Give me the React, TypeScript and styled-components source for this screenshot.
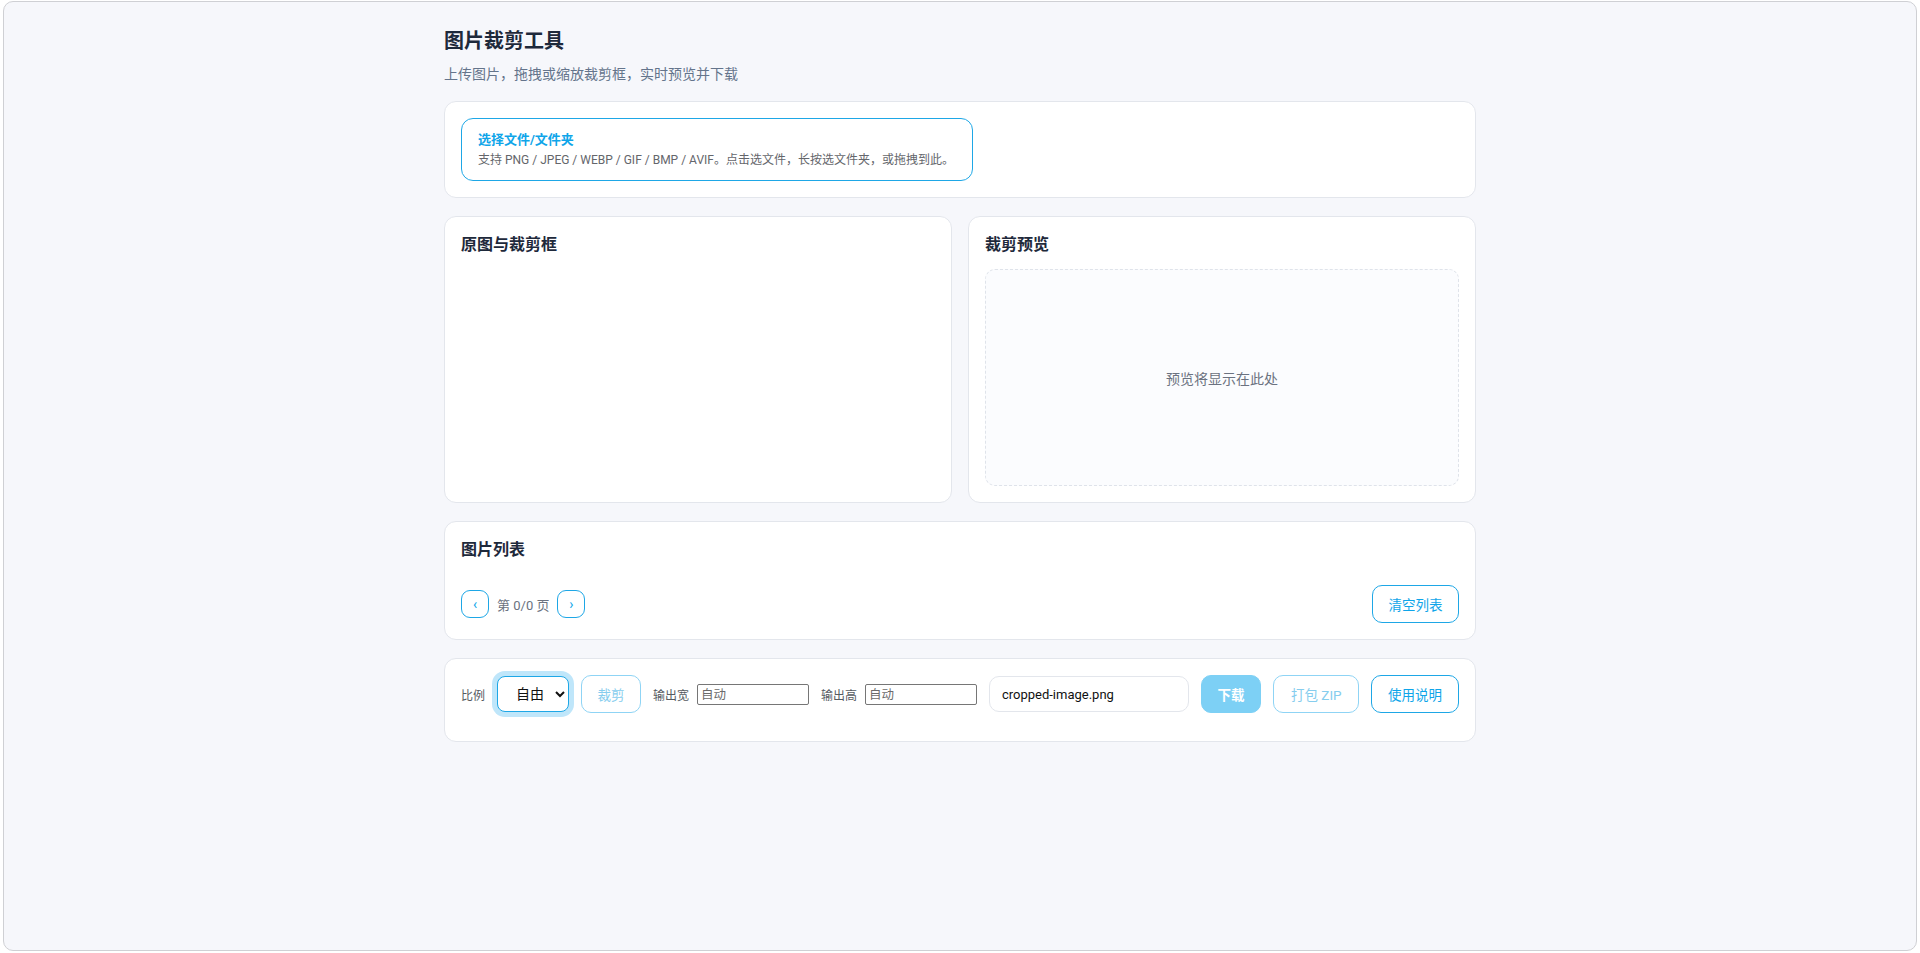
import styled, { createGlobalStyle } from 'styled-components';

const GlobalStyle = createGlobalStyle`
  html, body {
    margin: 0;
    padding: 0;
    background: #ffffff;
  }
  body {
    font-family: Roboto, "Noto Sans CJK SC", "Noto Sans", sans-serif;
    color: #1f2937;
  }
  * {
    box-sizing: border-box;
  }
`;

const Frame = styled.div`
  margin: 1px 3px 0;
  height: 950px;
  border: 1px solid #cfd0d4;
  border-radius: 10px;
  background: #f6f7fb;
  overflow: hidden;
`;

const Container = styled.div`
  width: 1032px;
  margin: 0 auto;
  padding-top: 25px;
  display: flex;
  flex-direction: column;
`;

const Title = styled.h1`
  margin: 0;
  font-size: 20px;
  line-height: 28px;
  font-weight: 700;
  color: #1e293b;
`;

const Subtitle = styled.p`
  margin: 9px 0 0;
  font-size: 14px;
  line-height: 20px;
  color: #64748b;
`;

const Stack = styled.div`
  margin-top: 17px;
  display: flex;
  flex-direction: column;
  gap: 18px;
`;

const Card = styled.section<{ bottom?: number }>`
  background: #ffffff;
  border: 1px solid #e3e6ec;
  border-radius: 12px;
  padding: 16px 16px ${(p) => p.bottom ?? 16}px;
  display: flex;
  flex-direction: column;
`;

const Grid = styled.div`
  display: grid;
  grid-template-columns: 1fr 1fr;
  gap: 16px;
`;

const CardTitle = styled.h2<{ gap?: number }>`
  margin: 0 0 ${(p) => p.gap ?? 12}px;
  font-size: 16px;
  line-height: 24px;
  font-weight: 700;
  color: #1e293b;
`;

const UploadBox = styled.div`
  width: 512px;
  height: 63px;
  border: 1px solid #1ea7e6;
  border-radius: 12px;
  padding: 0 12px 0 16px;
  display: flex;
  flex-direction: column;
  justify-content: center;
  gap: 2px;
`;

const UploadTitle = styled.div`
  font-size: 13px;
  line-height: 18px;
  font-weight: 700;
  color: #0ea5e9;
`;

const UploadDesc = styled.div`
  font-size: 12px;
  line-height: 18px;
  color: #64666b;
  white-space: nowrap;
`;

const Preview = styled.div`
  height: 217px;
  border: 1px dashed #dfe3ea;
  border-radius: 10px;
  background: #fbfcfe;
  display: flex;
  align-items: center;
  justify-content: center;
  font-size: 14px;
  color: #6b7280;
`;

const Row = styled.div<{ spread?: boolean }>`
  display: flex;
  align-items: center;
  gap: 12px;
  justify-content: ${(p) => (p.spread ? 'space-between' : 'flex-start')};
`;

const Pager = styled.div`
  display: flex;
  align-items: center;
  gap: 8px;
  font-size: 13px;
  color: #6b7280;
`;

const PageBtn = styled.button`
  width: 28px;
  height: 28px;
  padding: 0;
  border: 1px solid #1ea7e6;
  border-radius: 9px;
  background: #fff;
  color: #0ea5e9;
  font-size: 14px;
  line-height: 24px;
  font-family: inherit;
`;

const Button = styled.button<{ tone?: 'outline' | 'muted' | 'solid'; w: number }>`
  width: ${(p) => p.w}px;
  height: 38px;
  padding: 0;
  border-radius: 10px;
  font-family: inherit;
  font-size: 13.5px;
  border: 1px solid
    ${(p) => (p.tone === 'outline' ? '#1ea7e6' : p.tone === 'solid' ? '#7dd0f5' : '#8fd4f5')};
  background: ${(p) => (p.tone === 'solid' ? '#7dd0f5' : '#ffffff')};
  color: ${(p) => (p.tone === 'outline' ? '#0ea5e9' : p.tone === 'solid' ? '#ffffff' : '#86cdee')};
  font-weight: ${(p) => (p.tone === 'solid' ? 700 : 400)};
`;

const Label = styled.label`
  display: flex;
  align-items: center;
  gap: 8px;
  font-size: 12px;
  color: #555a61;
  white-space: nowrap;
`;

const Select = styled.select`
  width: 72px;
  height: 36px;
  margin-left: 4px;
  padding: 0 8px 0 14px;
  border: 1px solid #1ea7e6;
  border-radius: 8px;
  background: #fff;
  font-family: inherit;
  font-size: 14px;
  color: #111;
  box-shadow: 0 0 0 5px #bfe6fa;
  outline: none;
`;

const SizeInput = styled.input`
  width: 112px;
  height: 21px;
  padding: 1px 3px;
  border: 1px solid #767676;
  border-radius: 2px;
  font-family: inherit;
  font-size: 12.5px;
  &::placeholder {
    color: #6b6b6b;
  }
`;

const NameInput = styled.input`
  width: 200px;
  height: 36px;
  padding: 0 12px;
  border: 1px solid #e3e6ec;
  border-radius: 10px;
  font-family: inherit;
  font-size: 13px;
  color: #111;
`;

export default function App() {
  return (
    <>
      <GlobalStyle />
      <Frame>
        <Container>
          <Title>图片裁剪工具</Title>
          <Subtitle>上传图片，拖拽或缩放裁剪框，实时预览并下载</Subtitle>
          <Stack>
            <Card>
              <UploadBox>
                <UploadTitle>选择文件/文件夹</UploadTitle>
                <UploadDesc>支持 PNG / JPEG / WEBP / GIF / BMP / AVIF。点击选文件，长按选文件夹，或拖拽到此。</UploadDesc>
              </UploadBox>
            </Card>

            <Grid>
              <Card>
                <CardTitle>原图与裁剪框</CardTitle>
              </Card>
              <Card>
                <CardTitle>裁剪预览</CardTitle>
                <Preview>预览将显示在此处</Preview>
              </Card>
            </Grid>

            <Card>
              <CardTitle gap={23}>图片列表</CardTitle>
              <Row spread>
                <Pager>
                  <PageBtn>‹</PageBtn>
                  <span>第 0/0 页</span>
                  <PageBtn>›</PageBtn>
                </Pager>
                <Button tone="outline" w={87}>清空列表</Button>
              </Row>
            </Card>

            <Card bottom={28}>
              <Row>
                <Label>
                  比例
                  <Select defaultValue="free">
                    <option value="free">自由</option>
                    <option value="1:1">1:1</option>
                    <option value="4:3">4:3</option>
                    <option value="16:9">16:9</option>
                  </Select>
                </Label>
                <Button tone="muted" w={60} disabled>裁剪</Button>
                <Label>
                  输出宽
                  <SizeInput placeholder="自动" />
                </Label>
                <Label>
                  输出高
                  <SizeInput placeholder="自动" />
                </Label>
                <NameInput defaultValue="cropped-image.png" />
                <Button tone="solid" w={61} disabled>下载</Button>
                <Button tone="muted" w={86} disabled>打包 ZIP</Button>
                <Button tone="outline" w={88}>使用说明</Button>
              </Row>
            </Card>
          </Stack>
        </Container>
      </Frame>
    </>
  );
}
